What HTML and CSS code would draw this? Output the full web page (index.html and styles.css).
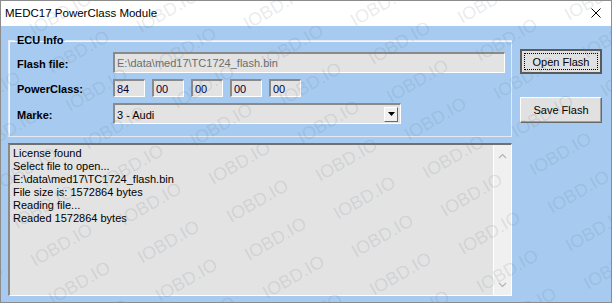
FILE: index.html
```html
<!DOCTYPE html>
<html lang="en">
<head>
    <meta charset="UTF-8">
    <title>MEDC17 PowerClass Module</title>
    <link rel="stylesheet" href="styles.css">
</head>
<body>
    <div class="window">
        <div class="titlebar">
            <span class="title">MEDC17 PowerClass Module</span>
            <svg class="close" width="10" height="10" viewBox="0 0 10 10">
                <path d="M0.5 0.5 L9.5 9.5 M9.5 0.5 L0.5 9.5" stroke="#000" stroke-width="1" fill="none"/>
            </svg>
        </div>
        <div class="client">
            <div class="main">
                <fieldset class="group">
                    <legend>ECU Info</legend>
                    <div class="row row-file">
                        <label>Flash file:</label>
                        <div class="edit edit-file">E:\data\med17\TC1724_flash.bin</div>
                    </div>
                    <div class="row row-power">
                        <label>PowerClass:</label>
                        <div class="bytes">
                            <div class="edit edit-byte">84</div>
                            <div class="edit edit-byte">00</div>
                            <div class="edit edit-byte">00</div>
                            <div class="edit edit-byte">00</div>
                            <div class="edit edit-byte">00</div>
                        </div>
                    </div>
                    <div class="row row-marke">
                        <label>Marke:</label>
                        <div class="edit combo">
                            <span class="combo-text">3 - Audi</span>
                            <span class="combo-btn">
                                <svg width="7" height="4" viewBox="0 0 7 4"><path d="M0 0 H7 L3.5 4 Z" fill="#000"/></svg>
                            </span>
                        </div>
                    </div>
                </fieldset>
                <div class="log">
                    <div class="log-text">
                        <div>License found</div>
                        <div>Select file to open...</div>
                        <div>E:\data\med17\TC1724_flash.bin</div>
                        <div>File size is: 1572864 bytes</div>
                        <div>Reading file...</div>
                        <div>Readed 1572864 bytes</div>
                    </div>
                    <div class="scrollbar">
                        <svg width="9" height="6" viewBox="0 0 9 6"><path d="M1 5 L4.5 1.5 L8 5" stroke="#b4b4b4" stroke-width="1.2" fill="none"/></svg>
                        <svg width="9" height="6" viewBox="0 0 9 6"><path d="M1 1 L4.5 4.5 L8 1" stroke="#b4b4b4" stroke-width="1.2" fill="none"/></svg>
                    </div>
                </div>
            </div>
            <div class="side">
                <button class="btn btn-default"><span class="focus">Open Flash</span></button>
                <button class="btn btn-save">Save Flash</button>
            </div>
        </div>
        <svg class="watermark" id="watermark" width="612" height="304"></svg>
    </div>

    <script>
        const mark = document.getElementById('watermark');
        for (let i = -4; i < 8; i++) {
            for (let j = -6; j < 10; j++) {
                const x = 347 + i * 107 + j * 18;
                const y = 161 - i * 3 + j * 38;
                if (x < -60 || x > 680 || y < -40 || y > 340) continue;
                const t = document.createElementNS('http://www.w3.org/2000/svg', 'text');
                t.setAttribute('x', x);
                t.setAttribute('y', y);
                t.setAttribute('transform', `rotate(-30 ${x} ${y})`);
                t.textContent = 'IOBD.IO';
                mark.appendChild(t);
            }
        }
    </script>
</body>
</html>
```

FILE: styles.css
```css
body {
    margin: 0;
    padding: 0;
    background: #fff;
    font-family: 'Liberation Sans', Arial, sans-serif;
    font-size: 11px;
    color: #000;
    overflow: hidden;
}

.window {
    position: relative;
    width: 610px;
    height: 301px;
    border: 1px solid #8c8c8c;
    background: #a6caf0;
    overflow: hidden;
}

.titlebar {
    height: 25px;
    background: #fff;
    display: flex;
    align-items: center;
    justify-content: space-between;
    padding: 0 10px 0 4px;
}

.title {
    font-size: 11.5px;
    margin-top: -2px;
}

.close {
    margin-top: -2px;
}

.client {
    display: flex;
    gap: 8px;
    padding: 8px 0 0 7px;
}

.main {
    width: 504px;
    display: flex;
    flex-direction: column;
}

.group {
    margin: 0;
    padding: 5px 6px 12px 6px;
    border: 1px solid #e4eaf2;
    box-shadow: inset 1px 1px 0 #f4f8fc;
}

.group legend {
    font-weight: bold;
    padding: 0 2px;
    line-height: 13px;
}

.row {
    display: flex;
    align-items: center;
}

.row label {
    width: 98px;
    padding-left: 2px;
    box-sizing: border-box;
    font-weight: bold;
    margin-top: 2px;
}

.row-power {
    margin-top: 6px;
}

.row-marke {
    margin-top: 6px;
}

.edit {
    box-sizing: border-box;
    background: #e3e3e3;
    border-style: solid;
    border-width: 2px 1px 1px 2px;
    border-color: #8a8a8a #fff #fff #8a8a8a;
    line-height: 14px;
    padding-left: 2px;
    white-space: nowrap;
}

.edit-file {
    width: 392px;
    height: 21px;
    padding-top: 2px;
    color: #6d6d6d;
}

.bytes {
    display: flex;
    gap: 7px;
}

.edit-byte {
    width: 32px;
    height: 18px;
    padding-top: 1px;
    color: #000040;
}

.combo {
    width: 288px;
    height: 21px;
    display: flex;
    align-items: center;
    justify-content: space-between;
    padding-right: 2px;
}

.combo-text {
    margin-top: 1px;
}

.combo-btn {
    width: 14px;
    height: 15px;
    box-sizing: border-box;
    background: #f0f0f0;
    border-style: solid;
    border-width: 1px;
    border-color: #fff #696969 #696969 #fff;
    display: flex;
    align-items: center;
    justify-content: center;
}

.log {
    margin-top: 6px;
    height: 153px;
    box-sizing: border-box;
    background: #e3e3e3;
    border-style: solid;
    border-width: 2px 1px 1px 2px;
    border-color: #707070 #fff #fff #8a8a8a;
    display: flex;
}

.log-text {
    flex: 1;
    padding: 2px 0 0 3px;
    line-height: 13px;
}

.scrollbar {
    width: 17px;
    background: #f0f0f0;
    border-left: 1px solid #fff;
    display: flex;
    flex-direction: column;
    justify-content: space-between;
    align-items: center;
    padding: 8px 0 7px;
}

.side {
    display: flex;
    flex-direction: column;
    padding-top: 15px;
}

.btn {
    width: 82px;
    height: 25px;
    box-sizing: border-box;
    background: #e1e1e1;
    font-family: 'Liberation Sans', Arial, sans-serif;
    font-size: 11px;
    color: #000;
    padding: 0;
    display: flex;
    align-items: center;
    justify-content: center;
}

.btn-default {
    border: 2px solid #5a5a5a;
    padding: 2px;
}

.btn-default .focus {
    flex: 1;
    align-self: stretch;
    display: flex;
    align-items: center;
    justify-content: center;
    border: 1px dotted #000;
}

.btn-save {
    margin-top: 23px;
    height: 26px;
    border-style: solid;
    border-width: 1px;
    border-color: #fff #696969 #696969 #fff;
    box-shadow: inset -1px -1px 0 #a0a0a0;
}

.watermark {
    position: absolute;
    top: -1px;
    left: -1px;
    pointer-events: none;
    font-family: 'Liberation Sans', Arial, sans-serif;
    font-size: 18px;
    fill: #6e7a88;
    fill-opacity: 0.16;
    text-anchor: middle;
    dominant-baseline: middle;
}
```
